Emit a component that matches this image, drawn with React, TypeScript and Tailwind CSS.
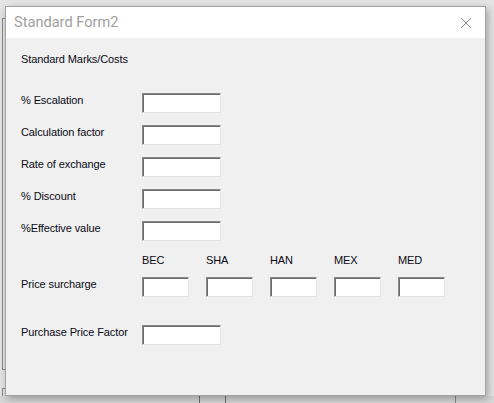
const FIELDS = ["% Escalation", "Calculation factor", "Rate of exchange", "% Discount", "%Effective value"];
const REGIONS = ["BEC", "SHA", "HAN", "MEX", "MED"];

const sunken =
  "bg-white border border-t-[#8a8a8a] border-l-[#8a8a8a] border-r-[#e3e3e3] border-b-[#e3e3e3] shadow-[inset_1px_1px_0_#696969]";

const Field = ({ w }: { w: string }) => <div className={`${sunken} ${w} h-[20px]`} />;

const App = () => (
  <div className="relative h-[403px] w-[494px] overflow-hidden bg-[#e4e4e4] font-['Liberation_Sans',Arial,sans-serif]">
    {/* windows lying underneath the dialog */}
    <div className="absolute left-[2px] top-[18px] h-[352px] w-[10px] border-l border-t border-b border-[#8c8c8c]" />
    <div className="absolute left-[2px] top-[388px] h-[30px] w-[10px] border-l border-t border-[#8c8c8c]" />
    <div className="absolute left-0 top-[396px] h-[10px] w-[494px] bg-[#d8d8d8]" />
    <div className="absolute left-[199px] top-[380px] h-[30px] w-px bg-[#6e6e6e]" />
    <div className="absolute left-[225px] top-[380px] h-[30px] w-px bg-[#6e6e6e]" />
    <div className="absolute left-[455px] top-[380px] h-[30px] w-px bg-[#8c8c8c]" />

    {/* dialog */}
    <div className="relative ml-[5px] mt-[6px] flex h-[390px] w-[481px] flex-col border border-[#a3a3a3] bg-[#f0f0f0] shadow-[2px_3px_8px_rgba(0,0,0,0.3)]">
      <div className="flex h-[31px] items-center justify-between bg-white pl-[8px] pr-[10px]">
        <span className="font-['Roboto',sans-serif] text-[14.6px] text-[#a0a0a0]">Standard Form2</span>
        <svg width="12" height="12" viewBox="0 0 12 12" className="mr-[3px]">
          <path d="M1 1L11 11M11 1L1 11" stroke="#8a8a8a" strokeWidth="1" />
        </svg>
      </div>

      <div className="flex flex-col pl-[15px] pt-[15px] text-[11px] leading-[13px] tracking-[-0.1px] text-[#0a0a14]">
        <div>Standard Marks/Costs</div>

        <div className="mt-[27px] flex flex-col gap-[12px]">
          {FIELDS.map((f) => (
            <div key={f} className="flex items-start">
              <span className="w-[121px] pt-[1px]">{f}</span>
              <Field w="w-[79px]" />
            </div>
          ))}
        </div>

        <div className="mt-[13px] flex pl-[121px]">
          {REGIONS.map((r) => (
            <span key={r} className="w-[64px]">{r}</span>
          ))}
        </div>

        <div className="mt-[10px] flex items-start">
          <span className="w-[121px] pt-[1px]">Price surcharge</span>
          <div className="flex gap-[17px]">
            {REGIONS.map((r) => (
              <Field key={r} w="w-[47px]" />
            ))}
          </div>
        </div>

        <div className="mt-[28px] flex items-start">
          <span className="w-[121px] pt-[1px]">Purchase Price Factor</span>
          <Field w="w-[79px]" />
        </div>
      </div>
    </div>
  </div>
);

export default App;
